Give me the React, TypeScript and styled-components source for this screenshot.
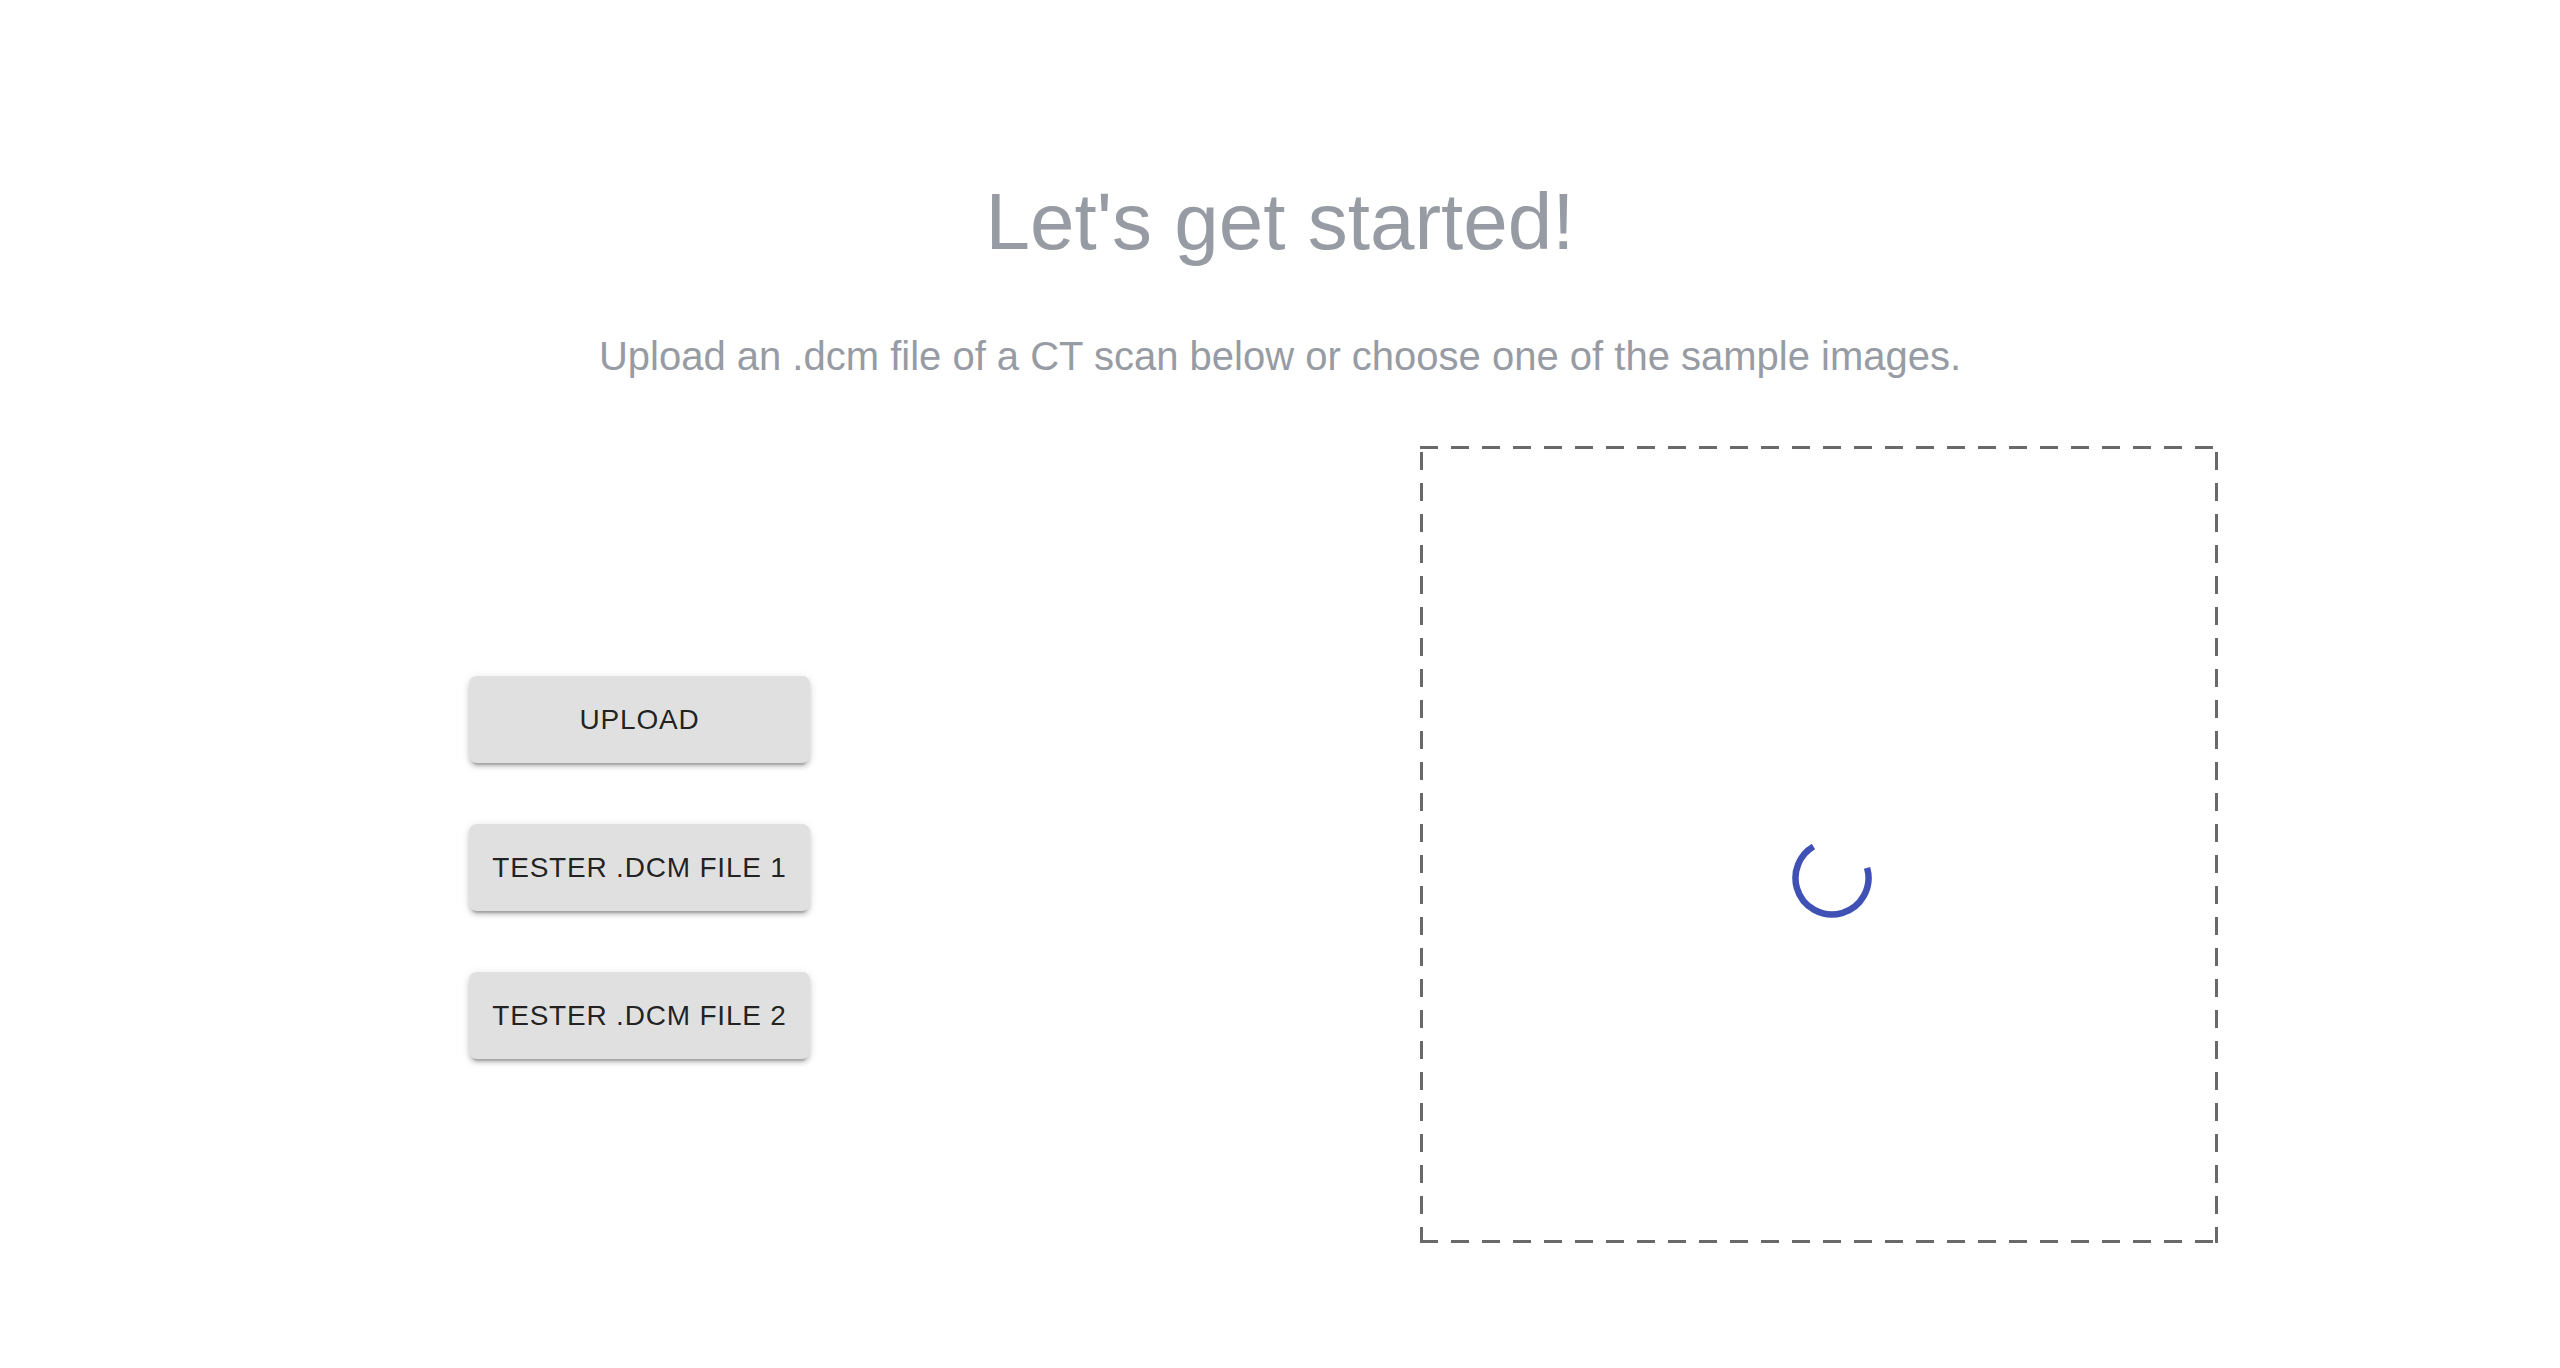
import React from "react";
import styled, { createGlobalStyle } from "styled-components";

const Global = createGlobalStyle`
  html, body { margin: 0; padding: 0; background: #ffffff; }
  body { font-family: "Liberation Sans", Arial, Helvetica, sans-serif; }
`;

const Page = styled.div`
  width: 2560px;
  min-height: 1368px;
  display: flex;
  flex-direction: column;
`;

const Title = styled.h1`
  margin: 174px 0 0;
  font-size: 80px;
  line-height: 96px;
  font-weight: 400;
  color: #979ba3;
  text-align: center;
`;

const Subtitle = styled.p`
  margin: 62px 0 0;
  font-size: 40px;
  line-height: 48px;
  color: #979ba3;
  text-align: center;
`;

const Main = styled.div`
  display: flex;
  align-items: flex-start;
  margin-top: 66px;
  padding-left: 469px;
  gap: 610px;
`;

const ButtonColumn = styled.div`
  display: flex;
  flex-direction: column;
  gap: 61px;
  padding-top: 230px;
`;

const Button = styled.button`
  width: 341px;
  height: 87px;
  border: none;
  border-radius: 8px;
  background: #e0e0e0;
  color: rgba(0, 0, 0, 0.87);
  font-family: "Liberation Sans", Arial, Helvetica, sans-serif;
  font-size: 28px;
  letter-spacing: 0.8px;
  text-transform: uppercase;
  box-shadow: 0px 6px 2px -4px rgba(0, 0, 0, 0.2),
    0px 4px 4px 0px rgba(0, 0, 0, 0.14), 0px 2px 10px 0px rgba(0, 0, 0, 0.12);
  cursor: pointer;
`;

const dashH = "repeating-linear-gradient(to right, #696969 0 18px, transparent 18px 31px)";
const dashV = "repeating-linear-gradient(to bottom, #696969 0 18px, transparent 18px 31px)";

const DropZone = styled.div`
  box-sizing: border-box;
  width: 798px;
  height: 797px;
  background-image: ${dashH}, ${dashH}, ${dashV}, ${dashV};
  background-repeat: no-repeat;
  background-size: 100% 3px, 100% 3px, 3px calc(100% - 6px), 3px calc(100% - 6px);
  background-position: left top, left bottom, left 0 top 6px, right 0 top 6px;
  display: flex;
  align-items: center;
  justify-content: center;
  padding: 66px 0 0 26px;
`;

const Spinner = () => (
  <svg width="80" height="80" viewBox="0 0 80 80">
    <circle
      cx="40"
      cy="40"
      r="36.5"
      fill="none"
      stroke="#3f51b5"
      strokeWidth="6.5"
      strokeDasharray={`${(2 * Math.PI * 36.5 * 255) / 360} 1000`}
      transform="rotate(-16 40 40)"
    />
  </svg>
);

export default function App() {
  return (
    <Page>
      <Global />
      <Title>Let's get started!</Title>
      <Subtitle>
        Upload an .dcm file of a CT scan below or choose one of the sample images.
      </Subtitle>
      <Main>
        <ButtonColumn>
          <Button>Upload</Button>
          <Button>Tester .dcm file 1</Button>
          <Button>Tester .dcm file 2</Button>
        </ButtonColumn>
        <DropZone>
          <Spinner />
        </DropZone>
      </Main>
    </Page>
  );
}
